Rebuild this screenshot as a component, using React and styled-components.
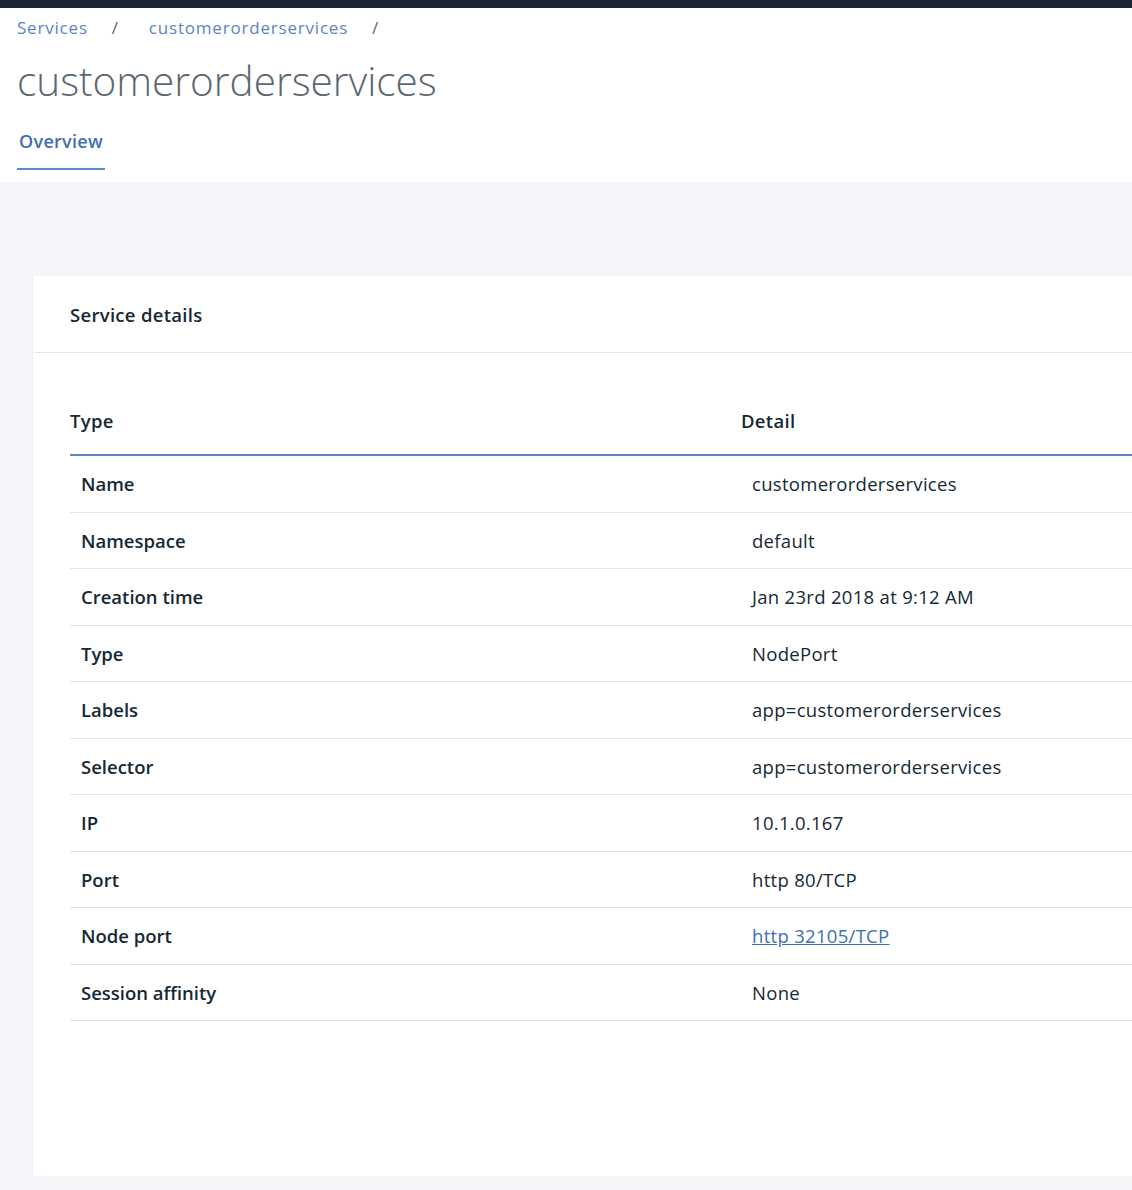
import styled, { createGlobalStyle } from "styled-components";

const GlobalStyle = createGlobalStyle`
  body {
    margin: 0;
    background: #f4f6fa;
    font-family: "Open Sans", "Liberation Sans", sans-serif;
    color: #152935;
    overflow: hidden;
  }
`;

const TopBar = styled.div`
  height: 8px;
  background: #1b2834;
`;

const Header = styled.header`
  background: #fff;
  padding: 0 17px;
  height: 174px;
  box-sizing: border-box;
`;

const Crumbs = styled.nav`
  display: flex;
  align-items: center;
  height: 38px;
  font-size: 17px;
  letter-spacing: 0.8px;
`;

const Crumb = styled.a`
  color: #5b83c4;
  text-decoration: none;
`;

const Slash = styled.span`
  color: #5a6872;
  margin: 0 30px 0 24px;
`;

const Title = styled.h1`
  margin: 0;
  height: 68px;
  display: flex;
  align-items: center;
  font-size: 40.5px;
  font-weight: 300;
  color: #5a6872;
`;

const Tabs = styled.div`
  display: flex;
`;

const Tab = styled.div`
  display: flex;
  align-items: center;
  padding: 0 2px;
  height: 56px;
  box-sizing: border-box;
  font-size: 18px;
  letter-spacing: 0.3px;
  font-weight: 600;
  color: #3d70b2;
  border-bottom: ${(p) => (p.$active ? "2px solid #5a8ad0" : "none")};
`;

const Main = styled.main`
  padding: 94px 0 0 33px;
`;

const Card = styled.section`
  width: 1416px;
  height: 900px;
  background: #fff;
  box-shadow: 0 1px 3px rgba(0, 0, 0, 0.08);
`;

const CardHead = styled.div`
  height: 76px;
  display: flex;
  align-items: center;
  padding-left: 35px;
  margin-left: 2px;
  border-bottom: 1px solid #dfe3e6;
  font-size: 18.5px;
  letter-spacing: 0.3px;
  font-weight: 600;
`;

const Table = styled.table`
  margin: 34px 37px 0;
  width: 1342px;
  border-collapse: collapse;
  font-size: 18.5px;
  letter-spacing: 0.3px;
`;

const Th = styled.th`
  text-align: left;
  width: 50%;
  height: 67px;
  padding: 0;
  font-weight: 600;
  border-bottom: 2px solid #5a86c5;
`;

const Td = styled.td`
  height: 55.5px;
  padding: 0 11px;
  border-bottom: 1px solid #dfe3e6;
  font-weight: ${(p) => (p.$label ? 600 : 400)};
  letter-spacing: ${(p) => (p.$label ? "0" : "0.3px")};
`;

const Link = styled.a`
  color: #3d70b2;
  text-decoration: underline;
`;

const rows = [
  ["Name", "customerorderservices"],
  ["Namespace", "default"],
  ["Creation time", "Jan 23rd 2018 at 9:12 AM"],
  ["Type", "NodePort"],
  ["Labels", "app=customerorderservices"],
  ["Selector", "app=customerorderservices"],
  ["IP", "10.1.0.167"],
  ["Port", "http 80/TCP"],
  ["Node port", "http 32105/TCP", true],
  ["Session affinity", "None"],
];

export default function App() {
  return (
    <>
      <GlobalStyle />
      <TopBar />
      <Header>
        <Crumbs>
          <Crumb href="#">Services</Crumb>
          <Slash>/</Slash>
          <Crumb href="#">customerorderservices</Crumb>
          <Slash>/</Slash>
        </Crumbs>
        <Title>customerorderservices</Title>
        <Tabs>
          <Tab $active>Overview</Tab>
        </Tabs>
      </Header>
      <Main>
        <Card>
          <CardHead>Service details</CardHead>
          <Table>
            <thead>
              <tr>
                <Th>Type</Th>
                <Th>Detail</Th>
              </tr>
            </thead>
            <tbody>
              {rows.map(([label, value, link]) => (
                <tr key={label}>
                  <Td $label>{label}</Td>
                  <Td>{link ? <Link href="#">{value}</Link> : value}</Td>
                </tr>
              ))}
            </tbody>
          </Table>
        </Card>
      </Main>
    </>
  );
}
